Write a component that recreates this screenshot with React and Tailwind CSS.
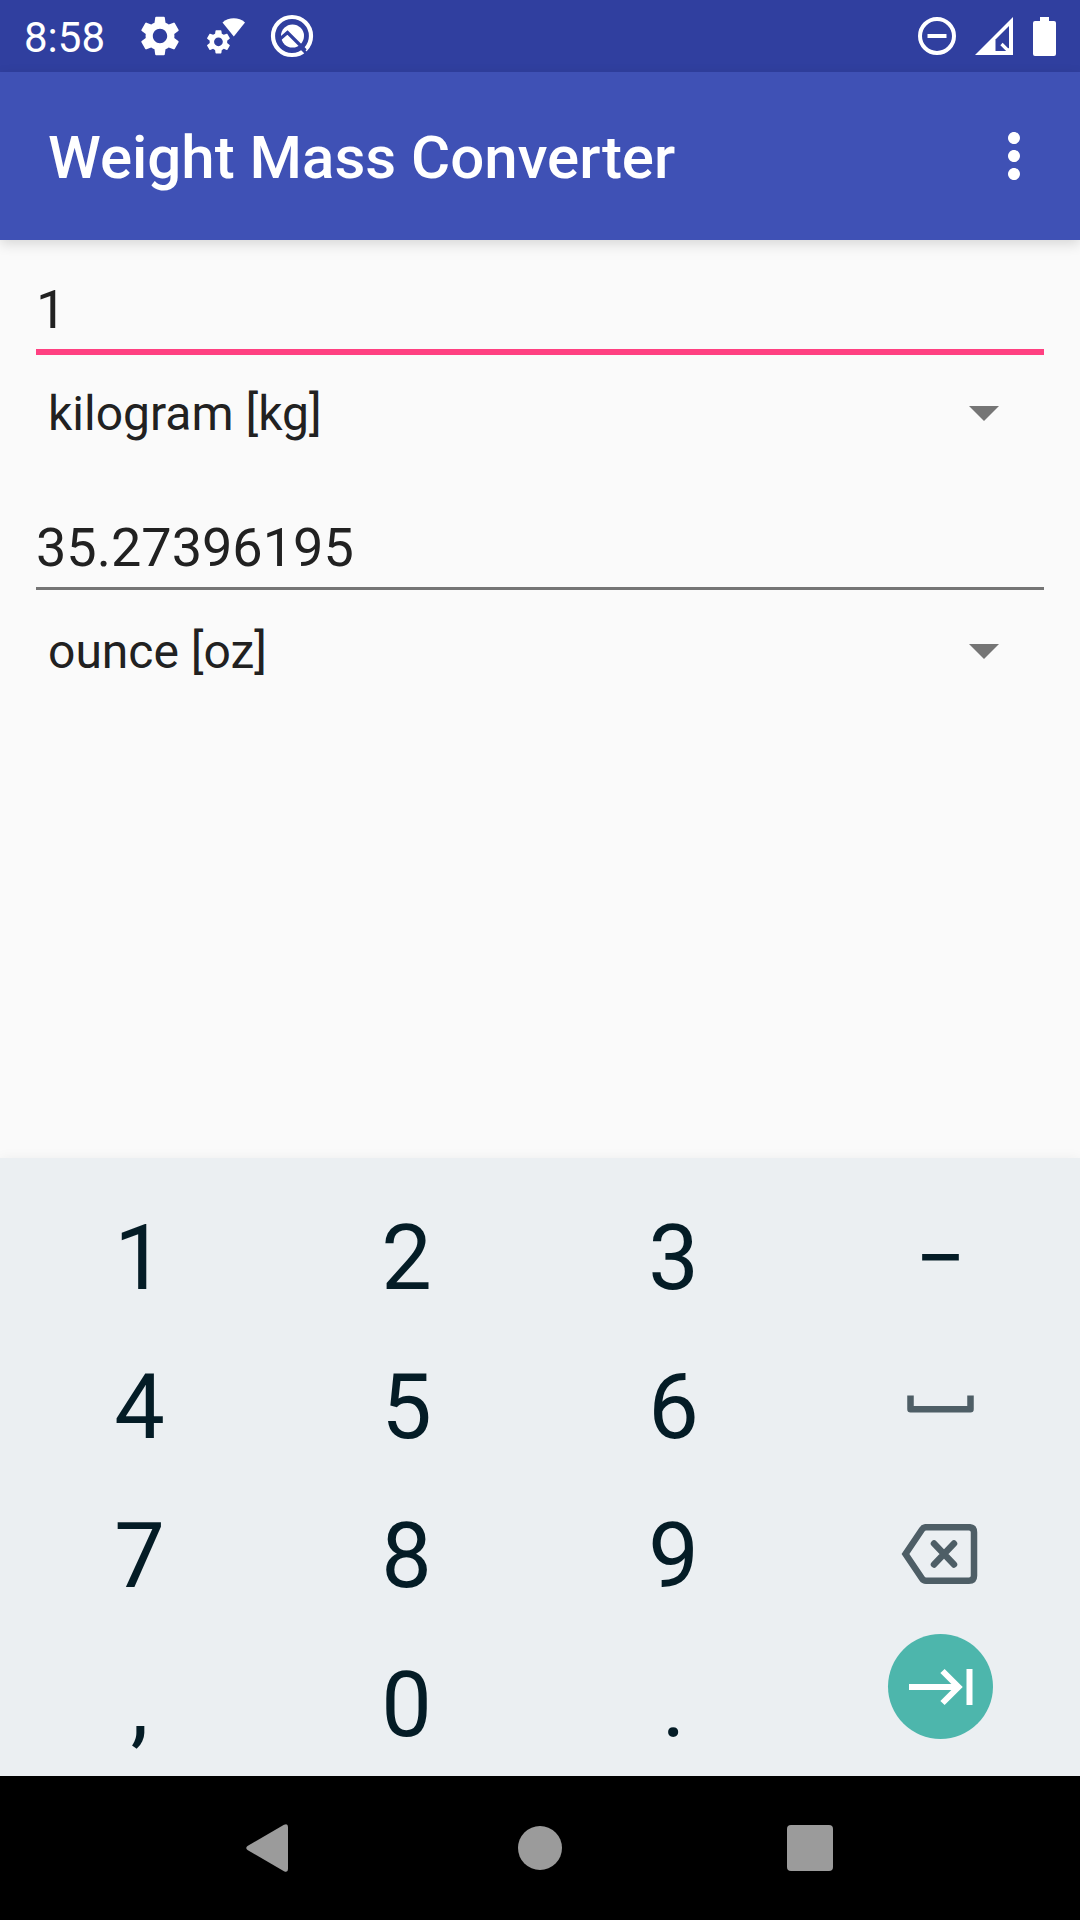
import { useState } from 'react';
import { MdSettings, MdMoreVert } from 'react-icons/md';

const units = {
  kilogram: 'kilogram [kg]',
  ounce: 'ounce [oz]',
};

function StatusBar() {
  return (
    <div className="flex h-[72px] items-center justify-between bg-[#303f9f] px-6 text-white">
      <div className="flex items-center">
        <span className="w-[103px] pt-[3px] text-[42px] leading-[48px]">8:58</span>
        <span className="flex w-[66px] justify-center">
          <MdSettings className="size-12" />
        </span>
        <span className="flex w-[66px] justify-center">
          <svg className="size-12" viewBox="0 0 48 48" fill="currentColor">
            <g transform="translate(1.8 15.2) scale(1.22)">
              <path d="M19.14 12.94c.04-.3.06-.61.06-.94 0-.32-.02-.64-.07-.94l2.03-1.58c.18-.14.23-.41.12-.61l-1.92-3.32c-.12-.22-.37-.29-.59-.22l-2.39.96c-.5-.38-1.03-.7-1.62-.94l-.36-2.54c-.04-.24-.24-.41-.48-.41h-3.84c-.24 0-.43.17-.47.41l-.36 2.54c-.59.24-1.13.57-1.62.94l-2.39-.96c-.22-.08-.47 0-.59.22L2.74 8.87c-.12.21-.08.47.12.61l2.03 1.58c-.05.3-.09.63-.09.94s.02.64.07.94l-2.03 1.58c-.18.14-.23.41-.12.61l1.92 3.32c.12.22.37.29.59.22l2.39-.96c.5.38 1.03.7 1.62.94l.36 2.54c.05.24.24.41.48.41h3.84c.24 0 .44-.17.47-.41l.36-2.54c.59-.24 1.13-.56 1.62-.94l2.39.96c.22.08.47 0 .59-.22l1.92-3.32c.12-.22.07-.47-.12-.61l-2.01-1.58zM12 15.6c-1.98 0-3.6-1.62-3.6-3.6s1.62-3.6 3.6-3.6 3.6 1.62 3.6 3.6-1.62 3.6-3.6 3.6z" />
            </g>
            <path d="M20.5 10.5C26.5 4.9 37 4.9 43 10.5L31.8 24.5Z" />
          </svg>
        </span>
        <span className="flex w-[66px] justify-center">
          <svg className="size-12" viewBox="0 0 48 48" fill="none" stroke="currentColor">
            <circle cx="24" cy="24" r="19" strokeWidth="4.2" />
            <circle cx="24.5" cy="24" r="11.5" fill="currentColor" stroke="none" />
            <path d="M12 27L19.5 20.5L37.5 38.5" stroke="#303f9f" strokeWidth="3.2" />
            <path d="M33 36L38 41" stroke="#303f9f" strokeWidth="3" />
          </svg>
        </span>
      </div>
      <div className="flex items-center gap-[19px]">
        <svg className="size-[38px]" viewBox="0 0 38 38" fill="none" stroke="currentColor" strokeWidth="4">
          <circle cx="19" cy="19" r="17" />
          <path d="M9.5 19H28.5" />
        </svg>
        <svg className="size-[38px]" viewBox="0 0 38 38">
          <path d="M0 38L38 0V38Z" fill="currentColor" />
          <path d="M20.5 22.5L34 9V30.5L31.5 34H20.5Z" fill="#303f9f" />
          <path d="M26.5 27L33.5 34" stroke="currentColor" strokeWidth="3.2" />
        </svg>
        <svg className="h-[39px] w-[24px]" viewBox="0 0 24 39" fill="currentColor">
          <path d="M8 0H17V4H22Q24 4 24 6V37Q24 39 22 39H3Q1 39 1 37V6Q1 4 3 4H8Z" />
        </svg>
      </div>
    </div>
  );
}

function UnitField({ id, label, value, onChange, unit, onUnitChange, active }) {
  return (
    <div>
      <div className="h-20">
        <input
          id={id}
          aria-label={label}
          inputMode="decimal"
          value={value}
          onChange={(e) => onChange(e.target.value)}
          className={`block w-full bg-transparent pb-[7px] text-[54px] leading-[64px] outline-none ${
            active ? 'border-b-[6px] border-[#ff4081]' : 'border-b-[3px] border-[#757575]'
          }`}
        />
      </div>
      <div className="mt-[19px] grid items-center">
        <select
          aria-label={`${label} unit`}
          value={unit}
          onChange={(e) => onUnitChange(e.target.value)}
          className="col-start-1 row-start-1 h-[72px] w-full appearance-none bg-transparent pl-3 pt-[2px] text-5xl leading-[64px] outline-none"
        >
          {Object.keys(units).map((key) => (
            <option key={key} value={key}>{units[key]}</option>
          ))}
        </select>
        <svg className="pointer-events-none col-start-1 row-start-1 mr-[45px] h-[15px] w-[30px] justify-self-end" viewBox="0 0 30 15">
          <path d="M0 0H30L15 15Z" fill="#757575" />
        </svg>
      </div>
    </div>
  );
}

function Key({ label, children, onClick }) {
  return (
    <button aria-label={label} onClick={onClick} className="flex h-[120px] items-center justify-center text-[90px] leading-[120px]">
      {children}
    </button>
  );
}

export default function App() {
  const [from, setFrom] = useState('1');
  const [to, setTo] = useState('35.27396195');
  const [fromUnit, setFromUnit] = useState('kilogram');
  const [toUnit, setToUnit] = useState('ounce');

  const type = (char) => () => setFrom(from + char);

  return (
    <div className="flex min-h-screen flex-col bg-[#fafafa] font-[Roboto,sans-serif] text-[#212121]">
      <StatusBar />
      <header className="flex h-[168px] items-center justify-between bg-[#3f51b5] pl-12 pr-[30px] text-white shadow-[0_4px_12px_rgba(0,0,0,0.14)]">
        <h1 className="pt-1 text-[60px] font-medium leading-[72px]">Weight Mass Converter</h1>
        <button aria-label="More options">
          <MdMoreVert className="size-[72px]" />
        </button>
      </header>

      <main className="flex flex-1 flex-col gap-[67px] px-9 pt-[38px]">
        <UnitField id="from" label="From" value={from} onChange={setFrom} unit={fromUnit} onUnitChange={setFromUnit} active />
        <UnitField id="to" label="To" value={to} onChange={setTo} unit={toUnit} onUnitChange={setToUnit} />
      </main>

      <section className="grid grid-cols-4 gap-y-[29px] bg-[#ebeff2] px-[6px] pb-[10px] pt-[41px] text-[#041c26] shadow-[0_0_12px_rgba(0,0,0,0.05)]">
        <Key onClick={type('1')}>1</Key>
        <Key onClick={type('2')}>2</Key>
        <Key onClick={type('3')}>3</Key>
        <Key onClick={type('-')}>−</Key>
        <Key onClick={type('4')}>4</Key>
        <Key onClick={type('5')}>5</Key>
        <Key onClick={type('6')}>6</Key>
        <Key label="Space" onClick={type(' ')}>
          <svg className="h-[26px] w-[68px]" viewBox="0 0 68 26" fill="none" stroke="#4e5e66" strokeWidth="6.5" strokeLinejoin="round">
            <path d="M3.5 0.5V14.2H63.5V0.5" />
          </svg>
        </Key>
        <Key onClick={type('7')}>7</Key>
        <Key onClick={type('8')}>8</Key>
        <Key onClick={type('9')}>9</Key>
        <Key label="Backspace" onClick={() => setFrom(from.slice(0, -1))}>
          <svg className="h-[66px] w-[80px]" viewBox="0 0 80 66" fill="none" stroke="#4e5e66" strokeWidth="6.5">
            <path d="M25 3.2H68Q73 3.2 73 8.2V51.8Q73 56.8 68 56.8H25Q22.5 56.8 21 54.5L4.5 30L21 5.5Q22.5 3.2 25 3.2Z" />
            <path d="M33 19.5L53 40.5M53 19.5L33 40.5" strokeLinecap="round" />
          </svg>
        </Key>
        <Key onClick={type(',')}>,</Key>
        <Key onClick={type('0')}>0</Key>
        <Key onClick={type('.')}>.</Key>
        <button aria-label="Next" className="-mt-3 flex size-[105px] items-center justify-center justify-self-center rounded-full bg-[#4db6ac]">
          <svg className="h-[38px] w-[66px]" viewBox="0 0 66 38" fill="none" stroke="#fff" strokeWidth="6">
            <path d="M1 19H50M34.5 3L50.5 19L34.5 35M61.5 1V37" />
          </svg>
        </button>
      </section>

      <nav className="grid h-36 grid-cols-3 items-center justify-items-center bg-black px-[12.5%]">
        <button aria-label="Back">
          <svg className="size-12" viewBox="0 0 48 48" fill="#9b9b9b">
            <path d="M1.5 22L38 0.8Q42 -1 42 3V45Q42 49 38 47.2L1.5 26Q-1 24 1.5 22Z" />
          </svg>
        </button>
        <button aria-label="Home" className="size-11 rounded-full bg-[#9b9b9b]" />
        <button aria-label="Recent apps" className="size-[46px] rounded-[4px] bg-[#9b9b9b]" />
      </nav>
    </div>
  );
}
